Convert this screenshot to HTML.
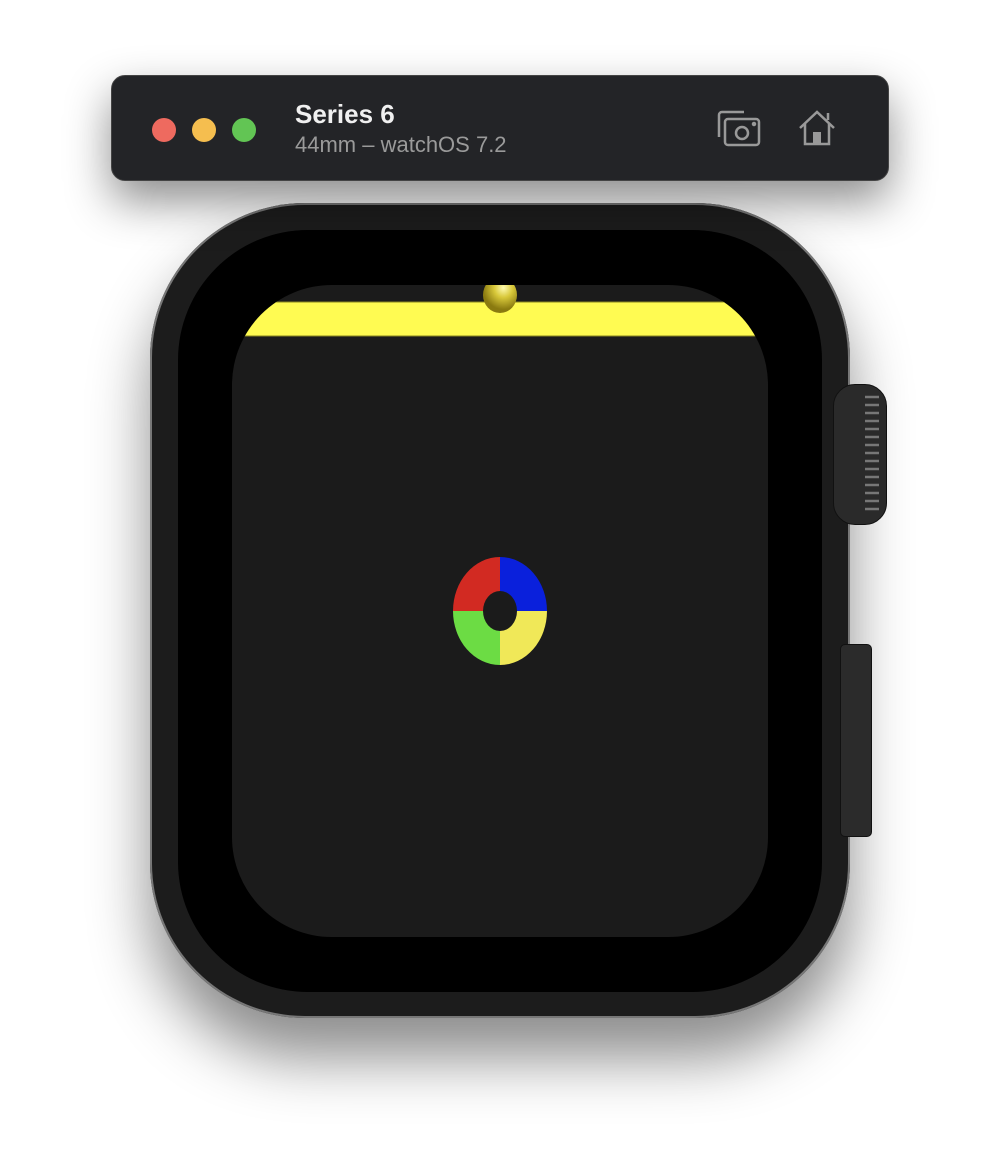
<!DOCTYPE html>
<html><head><style>
html,body{margin:0;padding:0;width:1000px;height:1170px;background:#fff;overflow:hidden;font-family:"Liberation Sans",sans-serif}
.bar{position:absolute;left:111px;top:75px;width:776px;height:104px;border-radius:14px;background:#232427;box-shadow:0 20px 45px rgba(0,0,0,.45);border:1px solid #444}
.dot{position:absolute;top:42px;width:24px;height:24px;border-radius:50%}
.t1{position:absolute;left:183px;top:23px;color:#f0f0f0;font-weight:bold;font-size:26px}
.t2{position:absolute;left:183px;top:56px;color:#9a9a9a;font-size:22px}
.watch{position:absolute;left:150px;top:203px;width:700px;height:815px;border-radius:155px;background:#1c1c1c;box-shadow:0 40px 60px rgba(0,0,0,.45),inset 0 0 0 2px #777}
.black{position:absolute;left:178px;top:230px;width:644px;height:762px;border-radius:130px;background:#000}
.crown{position:absolute;left:833px;top:384px;width:52px;height:139px;border-radius:22px;background:#2a2a2a;border:1px solid #111}
.btn{position:absolute;left:840px;top:644px;width:30px;height:191px;border-radius:5px;background:#2b2b2b;border:1px solid #111}
</style></head><body>
<div class="watch"></div>
<div class="crown"><svg width="52" height="139" style="position:absolute;left:0;top:0">
<g stroke="#777" stroke-width="2.5">
<line x1="31" y1="12" x2="45" y2="12"/><line x1="31" y1="20" x2="45" y2="20"/><line x1="31" y1="28" x2="45" y2="28"/><line x1="31" y1="36" x2="45" y2="36"/><line x1="31" y1="44" x2="45" y2="44"/><line x1="31" y1="52" x2="45" y2="52"/><line x1="31" y1="60" x2="45" y2="60"/><line x1="31" y1="68" x2="45" y2="68"/><line x1="31" y1="76" x2="45" y2="76"/><line x1="31" y1="84" x2="45" y2="84"/><line x1="31" y1="92" x2="45" y2="92"/><line x1="31" y1="100" x2="45" y2="100"/><line x1="31" y1="108" x2="45" y2="108"/><line x1="31" y1="116" x2="45" y2="116"/><line x1="31" y1="124" x2="45" y2="124"/></g></svg></div>
<div class="btn"></div>
<div class="black"></div>
<svg style="position:absolute;left:232px;top:285px" width="536" height="652">
<defs>
<clipPath id="c"><rect width="536" height="652" rx="100" ry="100"/></clipPath>
<radialGradient id="g" cx="0.6" cy="0.3" r="0.6"><stop offset="0" stop-color="#fffbb0"/><stop offset="0.45" stop-color="#d8c83a"/><stop offset="1" stop-color="#8a7a10"/></radialGradient>
</defs>
<g clip-path="url(#c)">
<rect width="536" height="652" fill="#1b1b1b"/>
<rect x="0" y="17" width="536" height="34" fill="#fffb52" stroke="#8a8620" stroke-width="1"/>
<ellipse cx="268" cy="10" rx="17" ry="18" fill="url(#g)"/>
</g></svg>
<svg style="position:absolute;left:450px;top:554px" width="100" height="114">
<defs><mask id="m"><rect width="100" height="114" fill="#fff"/><ellipse cx="50" cy="57" rx="17" ry="20" fill="#000"/></mask></defs>
<g mask="url(#m)">
<path d="M50 57 L50 3 A47 54 0 0 0 3 57Z" fill="#d22a22"/>
<path d="M50 57 L50 3 A47 54 0 0 1 97 57Z" fill="#0a20dc"/>
<path d="M50 57 L3 57 A47 54 0 0 0 50 111Z" fill="#6cdc44"/>
<path d="M50 57 L97 57 A47 54 0 0 1 50 111Z" fill="#f0e858"/>
</g></svg>
<div class="bar">
<div class="dot" style="left:40px;background:#ee6a5f"></div>
<div class="dot" style="left:80px;background:#f5be4f"></div>
<div class="dot" style="left:120px;background:#62c554"></div>
<div class="t1">Series 6</div>
<div class="t2">44mm – watchOS 7.2</div>
<svg style="position:absolute;left:604px;top:33px" width="46" height="40" fill="none" stroke="#999" stroke-width="2.5">
<path d="M3 28 V6 a3 3 0 0 1 3-3 H28"/>
<rect x="9" y="10" width="34" height="26" rx="3"/>
<circle cx="26" cy="24" r="6"/>
<circle cx="38" cy="15" r="1" fill="#999"/>
</svg>
<svg style="position:absolute;left:685px;top:33px" width="42" height="38" fill="none" stroke="#999" stroke-width="2.5">
<path d="M3 19 L20 3 L37 19 M8 14 V35 H32 V14 M31 4 V11"/>
<rect x="16" y="23" width="8" height="12" fill="#999" stroke="none"/>
</svg>
</div>
</body></html>
